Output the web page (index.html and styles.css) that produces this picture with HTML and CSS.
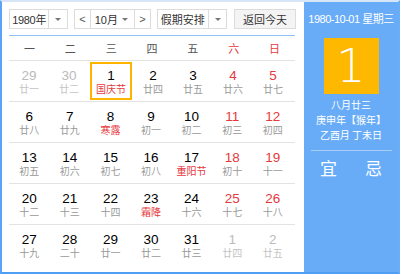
FILE: index.html
```html
<!DOCTYPE html>
<html lang="zh-CN">
<head>
    <meta charset="UTF-8">
    <title>万年历</title>
    <link rel="stylesheet" href="styles.css">
</head>
<body>
    <div class="calendar">
        <div class="cal-main">
            <div class="toolbar">
                <div class="select year-select">
                    <span class="select-text">1980年</span>
                    <span class="select-arrow"></span>
                </div>
                <div class="select month-select">
                    <span class="nav-btn">&lt;</span>
                    <span class="select-text">10月</span>
                    <span class="select-arrow"></span>
                    <span class="nav-btn">&gt;</span>
                </div>
                <div class="select holiday-select">
                    <span class="select-text">假期安排</span>
                    <span class="select-arrow"></span>
                </div>
                <button class="today-btn">返回今天</button>
            </div>

            <div class="week-head">
                <span>一</span><span>二</span><span>三</span><span>四</span><span>五</span>
                <span class="weekend">六</span><span class="weekend">日</span>
            </div>

            <div class="days" id="days"></div>
        </div>

        <div class="cal-side">
            <p class="side-date">1980-10-01 星期三</p>
            <div class="side-day">1</div>
            <p class="side-lunar">八月廿三</p>
            <p class="side-lunar">庚申年【猴年】</p>
            <p class="side-lunar">乙酉月 丁未日</p>
            <div class="side-line"></div>
            <div class="side-yiji">
                <span>宜</span>
                <span>忌</span>
            </div>
        </div>
    </div>

    <script>
        // [day, lunar, type]  type: o = other month, w = weekend, h = festival/term
        const days = [
            ['29', '廿一', 'o'], ['30', '廿二', 'o'], ['1', '国庆节', 'h today'], ['2', '廿四', ''], ['3', '廿五', ''], ['4', '廿六', 'w'], ['5', '廿七', 'w'],
            ['6', '廿八', ''], ['7', '廿九', ''], ['8', '寒露', 'h'], ['9', '初一', ''], ['10', '初二', ''], ['11', '初三', 'w'], ['12', '初四', 'w'],
            ['13', '初五', ''], ['14', '初六', ''], ['15', '初七', ''], ['16', '初八', ''], ['17', '重阳节', 'h'], ['18', '初十', 'w'], ['19', '十一', 'w'],
            ['20', '十二', ''], ['21', '十三', ''], ['22', '十四', ''], ['23', '霜降', 'h'], ['24', '十六', ''], ['25', '十七', 'w'], ['26', '十八', 'w'],
            ['27', '十九', ''], ['28', '二十', ''], ['29', '廿一', ''], ['30', '廿二', ''], ['31', '廿三', ''], ['1', '廿四', 'o'], ['2', '廿五', 'o']
        ];

        const box = document.getElementById('days');
        let html = '';
        for (let i = 0; i < days.length; i += 7) {
            html += '<div class="week">';
            days.slice(i, i + 7).forEach(d => {
                html += '<div class="day ' + d[2] + '"><span class="num">' + d[0] + '</span><span class="lunar">' + d[1] + '</span></div>';
            });
            html += '</div>';
        }
        box.innerHTML = html;
    </script>
</body>
</html>
```

FILE: styles.css
```css
body {
    margin: 0;
    font-family: "Liberation Sans", Arial, "Noto Sans CJK SC", sans-serif;
    color: #000;
}
p {
    margin: 0;
}
.calendar {
    display: flex;
    width: 400px;
    height: 274px;
    box-sizing: border-box;
    border: 2px solid #6aadf7;
    border-top-color: #d6e6f8;
    border-bottom-color: #4f9df5;
    border-left-color: #5aa3f6;
    background: #fff;
}
.cal-main {
    width: 302px;
    padding: 7px 0 0 7px;
    box-sizing: border-box;
}
.toolbar {
    display: flex;
    height: 20px;
    font-size: 11px;
    white-space: nowrap;
}
.select {
    display: flex;
    align-items: stretch;
    border: 1px solid #dcdcdc;
    margin-right: 6px;
    color: #333;
}
.select-text {
    display: flex;
    align-items: center;
    justify-content: center;
}
.select-arrow {
    width: 18px;
    border-left: 1px solid #dcdcdc;
    position: relative;
}
.select-arrow::after {
    content: "";
    position: absolute;
    left: 6px;
    top: 8px;
    border: 3px solid transparent;
    border-top: 3px solid #777;
    border-bottom: 0;
}
.year-select {
    width: 59px;
    box-sizing: border-box;
}
.year-select .select-text {
    width: 39px;
    letter-spacing: -0.3px;
}
.month-select {
    width: 77px;
    box-sizing: border-box;
}
.month-select .select-arrow {
    border-left: 0;
    width: 14px;
}
.month-select .select-arrow::after {
    left: 2px;
}
.month-select .select-text {
    flex: 1;
    justify-content: flex-end;
    padding-right: 2px;
}
.nav-btn {
    width: 15px;
    display: flex;
    align-items: center;
    justify-content: center;
    color: #555;
}
.nav-btn:first-child {
    border-right: 1px solid #dcdcdc;
}
.nav-btn:last-child {
    border-left: 1px solid #dcdcdc;
}
.holiday-select {
    width: 70px;
    box-sizing: border-box;
    margin-right: 7px;
}
.holiday-select .select-text {
    width: 51px;
}
.today-btn {
    width: 62px;
    height: 20px;
    padding: 0;
    font: inherit;
    color: #333;
    background: #f4f4f4;
    border: 1px solid #dcdcdc;
}
.week-head {
    display: flex;
    width: 286px;
    height: 24px;
    margin-top: 6px;
    border-top: 1px solid #8fc0f6;
    border-bottom: 1px solid #e3e3e3;
    font-size: 11px;
    color: #555;
}
.week-head span {
    flex: 1;
    display: flex;
    align-items: center;
    justify-content: center;
}
.week-head .weekend {
    color: #e6393d;
}
.days {
    width: 286px;
}
.week {
    display: flex;
    height: 40px;
    border-bottom: 1px solid #e3e3e3;
    padding-right: 2px;
}
.week:last-child {
    border-bottom: 0;
}
.day {
    flex: 1;
    display: flex;
    flex-direction: column;
    align-items: center;
    box-sizing: border-box;
    margin: 1px;
    padding-top: 6px;
}
.num {
    font-size: 13.5px;
    line-height: 16px;
}
.lunar {
    font-size: 10px;
    line-height: 12px;
    color: #999;
}
.day.w .num {
    color: #e6393d;
}
.day.h .lunar {
    color: #e6393d;
}
.day.o .num {
    color: #bbb;
}
.day.o .lunar {
    color: #c4c4c4;
}
.day.today {
    border: 2px solid #ffb400;
    padding-top: 4px;
}
.cal-side {
    flex: 1;
    background: #68acf8;
    color: #fff;
    display: flex;
    flex-direction: column;
    align-items: center;
    padding-top: 10px;
    white-space: nowrap;
}
.side-date {
    font-size: 11px;
    line-height: 14px;
    letter-spacing: -0.5px;
}
.side-day {
    width: 55px;
    height: 56px;
    margin-top: 12px;
    background: #ffb800;
    font-size: 46px;
    line-height: 56px;
    text-align: center;
    font-family: "DejaVu Sans", sans-serif;
    font-weight: 300;
}
.side-lunar {
    font-size: 10px;
    line-height: 15px;
    font-family: "Noto Sans CJK SC", sans-serif;
}
.side-day + .side-lunar {
    margin-top: 3px;
}
.side-line {
    width: 81px;
    height: 1px;
    background: #a9cffa;
    margin-top: 8px;
}
.side-yiji {
    display: flex;
    gap: 28px;
    margin-top: 6px;
    font-size: 17px;
    line-height: 22px;
    font-family: "Noto Sans CJK SC", sans-serif;
}
```
